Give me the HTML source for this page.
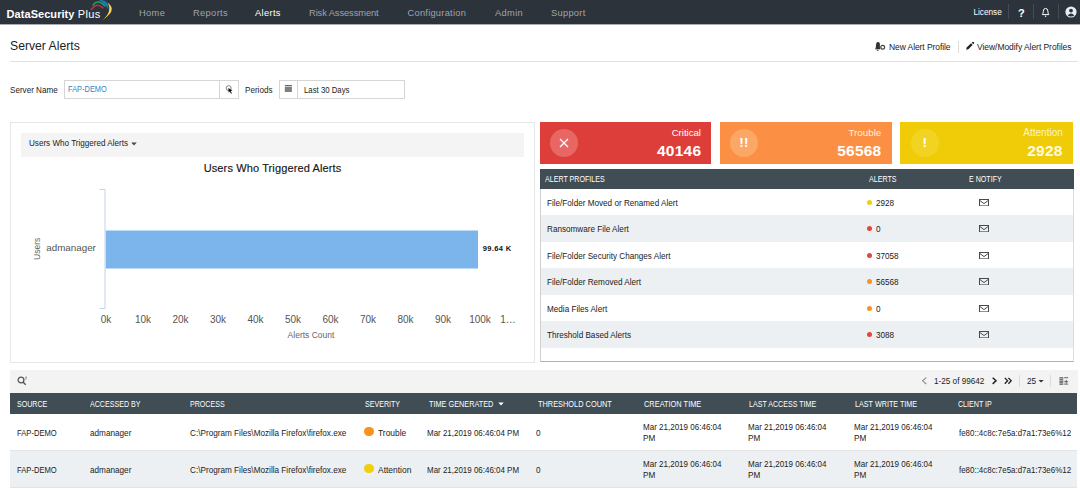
<!DOCTYPE html>
<html>
<head>
<meta charset="utf-8">
<title>Server Alerts</title>
<style>
*{box-sizing:border-box;margin:0;padding:0}
html,body{width:1080px;height:497px;overflow:hidden;background:#fff}
body{font-family:"Liberation Sans",sans-serif;color:#222;position:relative;font-size:9px}
.abs{position:absolute;white-space:nowrap}
/* header */
#hdr{position:absolute;left:0;top:0;width:1080px;height:25px;background:#2d333b;border-bottom:1px solid #abadb1}
#hdr .nav{position:absolute;top:7.400px;font-size:9.300px;letter-spacing:0.350px;color:#a0a4a9;line-height:12px;white-space:nowrap}
#hdr .nav.on{color:#fff}
#logo{position:absolute;left:6.600px;top:6.300px;font-size:11px;line-height:16px;color:#fff;white-space:nowrap;letter-spacing:0.050px}
#logo b{font-weight:bold}
.vsep{position:absolute;top:4px;width:1px;height:15px;background:#454b53}
/* title */
#title{left:10px;top:37.500px;font-size:12.200px;line-height:16px;color:#222}
#hr1{position:absolute;left:10px;top:61px;width:1068px;height:1px;background:#e2e2e2}
.tlink{top:42.100px;font-size:8.5px;line-height:11px;color:#222}
/* filter */
.lbl{font-size:9px;line-height:11px;color:#1c1c1c;transform:scaleX(0.900);transform-origin:0 0}
.box{position:absolute;border:1px solid #d6d6d6;background:#fff}
/* panels */
#chart{position:absolute;left:10px;top:122px;width:525px;height:241px;border:1px solid #e6e6e6;background:#fff}
#ddbar{position:absolute;left:20.500px;top:133px;width:503.500px;height:24px;background:#f4f4f4}
#right{position:absolute;left:540px;top:169px;width:534px;height:193px;border:1px solid #d0d0d0;border-bottom-color:#b0b0b0;border-right-color:#dcdcdc;border-top:none;background:#fff}
.card{position:absolute;top:122px;height:42px;color:#fff}
.card .ic{position:absolute;left:9.500px;top:7px;width:28px;height:28px;border-radius:50%}
.card .t{position:absolute;right:10px;top:5.300px;font-size:9.600px;line-height:12px}
.card .n{position:absolute;right:9.700px;top:17.600px;font-size:15.500px;letter-spacing:0.250px;line-height:22px;font-weight:bold}
.th{position:absolute;background:#414d55;color:#fff;font-size:8.300px}
.th span{position:absolute;white-space:nowrap;line-height:10px;transform:scaleX(0.855);transform-origin:0 0}
.row{position:absolute;left:541px;width:532px;height:26px;font-size:8.800px;color:#1a1a1a}
.row.g{background:#edf0f2}
.row span{position:absolute;top:9.100px;line-height:11px;white-space:nowrap;transform:scaleX(0.925);transform-origin:0 0}
.dot{position:absolute;width:5.400px;height:5.400px;border-radius:50%;top:10.600px;left:325.500px}
.env{position:absolute;left:438.200px;top:10px}
/* bottom table */
#tbar{position:absolute;left:10px;top:370px;width:1068px;height:23px;background:#f3f3f3}
.brow{position:absolute;left:10px;width:1067px;height:37px;font-size:8.800px;color:#222;border-bottom:1px solid #e4e4e4}
.brow.g{background:#edf0f2}
.brow span{position:absolute;line-height:11px;white-space:nowrap;transform:scaleX(0.930);transform-origin:0 0}
.sdot{position:absolute;left:354.400px;top:12.800px;width:9.400px;height:9.400px;border-radius:50%}
</style>
</head>
<body>
<!-- HEADER -->
<div id="hdr">
  <div id="logo"><b>DataSecurity</b> <span style="margin-left:0.300px;letter-spacing:0.350px">Plus</span></div>
  <svg class="abs" style="left:88px;top:0" width="26" height="24" viewBox="88 0 26 24">
    <path d="M91.300 9.500 Q96.700 2 102.900 7.800" fill="none" stroke="#b8324a" stroke-width="1.600" stroke-linecap="round"/>
    <path d="M93 5 Q97.800 -1.300 104.900 5.900" fill="none" stroke="#21a04f" stroke-width="1.500" stroke-linecap="round"/>
    <path d="M98.800 0 Q109.300 -0.700 108.400 9.700 Q105 3.800 98.800 0Z" fill="#1778b8"/>
    <path d="M107.500 2.400 Q118.300 10.500 101.900 20.400 Q113 11.500 107.500 2.400Z" fill="#f6d55c"/>
  </svg>
  <div class="nav" style="left:139px">Home</div>
  <div class="nav" style="left:193px">Reports</div>
  <div class="nav on" style="left:255px">Alerts</div>
  <div class="nav" style="left:309px;letter-spacing:-0.080px">Risk Assessment</div>
  <div class="nav" style="left:407.500px;letter-spacing:0.250px">Configuration</div>
  <div class="nav" style="left:495px">Admin</div>
  <div class="nav" style="left:551px;letter-spacing:0.280px">Support</div>
  <div class="nav on" style="left:973.500px;top:5.500px;font-size:8.300px;letter-spacing:-0.050px">License</div>
  <div class="vsep" style="left:1008px"></div>
  <div class="nav on" style="left:1018px;top:6.500px;font-size:11px;letter-spacing:0;font-weight:bold">?</div>
  <div class="vsep" style="left:1033px"></div>
  <svg class="abs" style="left:1040px;top:6px" width="12" height="12" viewBox="0 0 12 12">
    <path d="M2.3 8.6 Q3.300 7.600 3.300 5.400 Q3.300 2.400 5.600 2.400 Q7.900 2.400 7.900 5.400 Q7.900 7.600 8.900 8.600 Z" fill="none" stroke="#fff" stroke-width="1" stroke-linejoin="round"/>
    <circle cx="5.600" cy="10.300" r="0.700" fill="#fff"/>
  </svg>
  <div class="vsep" style="left:1058px"></div>
  <svg class="abs" style="left:1064.500px;top:5.700px" width="12" height="12" viewBox="0 0 12 12">
    <circle cx="6" cy="6" r="5.6" fill="#e9edf2"/>
    <circle cx="6" cy="4.6" r="1.9" fill="#2d333b"/>
    <path d="M2.6 9.6 Q6 5.6 9.4 9.6 Q6 11.6 2.6 9.6Z" fill="#2d333b"/>
  </svg>
</div>

<!-- TITLE -->
<div id="title" class="abs">Server Alerts</div>
<svg class="abs" style="left:873px;top:40px" width="14" height="12" viewBox="873 40 14 12">
  <path d="M875 49.200 Q876 48 876 45.500 Q876 42.100 878 42.100 Q880.200 42.100 879.900 45.500 Q879.700 48 880.400 49.200Z" fill="#333"/>
  <rect x="876.800" y="49.800" width="1.800" height="0.900" fill="#333"/>
  <circle cx="882.700" cy="47.200" r="1.900" fill="#fff" stroke="#444" stroke-width="1.200"/>
</svg>
<div class="abs tlink" style="left:889px;letter-spacing:-0.080px">New Alert Profile</div>
<div class="abs" style="left:958px;top:41px;width:1px;height:12px;background:#dcdcdc"></div>
<svg class="abs" style="left:964px;top:40px" width="12" height="12" viewBox="964 40 12 12">
  <path d="M966.100 49.800 L966.700 47.600 L971 43.300 L972.600 44.900 L968.300 49.200Z" fill="#222"/>
  <path d="M971.700 42.700 L972.500 41.900 Q973 41.500 973.500 42 L974.100 42.600 Q974.500 43.100 974 43.600 L973.300 44.300Z" fill="#222"/>
</svg>
<div class="abs tlink" style="left:977px;letter-spacing:-0.050px">View/Modify Alert Profiles</div>
<div id="hr1"></div>

<!-- FILTER -->
<div class="abs lbl" style="left:10px;top:84.800px">Server Name</div>
<div class="box" style="left:64px;top:80px;width:156px;height:19px"></div>
<div class="abs lbl" style="left:67.500px;top:84.300px;color:#3f7fbc;font-size:8.600px;transform:scaleX(0.865)">FAP-DEMO</div>
<div class="box" style="left:219px;top:80px;width:20px;height:19px"></div>
<svg class="abs" style="left:224px;top:84px" width="11" height="11" viewBox="224 84 11 11">
  <circle cx="228.700" cy="88.100" r="2.500" fill="none" stroke="#777" stroke-width="0.900"/>
  <path d="M228.300 88 L232.500 90.500 L230.700 91.100 L231.900 93.300 L231 93.800 L229.900 91.600 L228.700 92.800Z" fill="#111"/>
</svg>
<div class="abs lbl" style="left:245px;top:84.800px">Periods</div>
<div class="box" style="left:279px;top:80px;width:19px;height:19px"></div>
<svg class="abs" style="left:284px;top:84px" width="9" height="9" viewBox="284 84 9 9">
  <rect x="284.800" y="85" width="7.100" height="1.200" fill="#666"/>
  <rect x="284.800" y="86.800" width="7.100" height="5.200" fill="#808080"/>
</svg>
<div class="box" style="left:297px;top:80px;width:108px;height:19px"></div>
<div class="abs lbl" style="left:304px;top:84.500px;transform:scaleX(0.865)">Last 30 Days</div>

<!-- CHART PANEL -->
<div id="chart"></div>
<div id="ddbar"></div>
<div class="abs lbl" style="left:28.600px;top:138.300px">Users Who Triggered Alerts</div>
<svg class="abs" style="left:131px;top:142px" width="6" height="4" viewBox="0 0 6 4"><path d="M0.3 0.5 H5.7 L3 3.5Z" fill="#444"/></svg>
<svg class="abs" style="left:11px;top:158px" width="519" height="200" viewBox="11 158 519 200" font-family="'Liberation Sans',sans-serif">
  <text x="272.500" y="171.600" text-anchor="middle" font-size="11" fill="#161616" stroke="#161616" stroke-width="0.150" letter-spacing="0.120">Users Who Triggered Alerts</text>
  <path d="M99.5 189.5 H105 V308.500 H99.500" fill="none" stroke="#c6d2e6" stroke-width="1"/>
  <rect x="105.800" y="230.500" width="372.200" height="38" fill="#7cb5ec"/>
  <text x="46.300" y="251" font-size="9.800" fill="#555">admanager</text>
  <text x="482.800" y="251" font-size="7.500" font-weight="bold" fill="#111" letter-spacing="0.350">99.64 K</text>
  <text transform="translate(40.300,248.800) rotate(-90)" text-anchor="middle" font-size="8.500" fill="#666">Users</text>
  <g font-size="10" fill="#555" text-anchor="middle">
    <text x="106" y="323">0k</text>
    <text x="143" y="323">10k</text>
    <text x="180.500" y="323">20k</text>
    <text x="218" y="323">30k</text>
    <text x="255.500" y="323">40k</text>
    <text x="293" y="323">50k</text>
    <text x="330.500" y="323">60k</text>
    <text x="368" y="323">70k</text>
    <text x="405.500" y="323">80k</text>
    <text x="443" y="323">90k</text>
    <text x="480" y="323">100k</text>
    <text x="508" y="323">1…</text>
  </g>
  <text x="311" y="338" text-anchor="middle" font-size="8.500" fill="#666">Alerts Count</text>
</svg>

<!-- RIGHT PANEL -->
<div id="right"></div>
<div class="card" style="left:540px;width:171px;background:#de3e3a">
  <div class="ic" style="background:#e86764"></div>
  <svg class="abs" style="left:18.500px;top:16px" width="10" height="10" viewBox="0 0 10 10"><path d="M1 1 L9 9 M9 1 L1 9" stroke="#fff" stroke-width="1.300" fill="none"/></svg>
  <div class="t">Critical</div><div class="n">40146</div>
</div>
<div class="card" style="left:720px;width:171.500px;background:#fb8f43">
  <div class="ic" style="background:#fca766"></div>
  <div class="abs" style="left:10px;top:13.800px;width:28px;text-align:center;font-size:13.500px;line-height:14px;font-weight:bold;color:#fff;letter-spacing:0.300px">!!</div>
  <div class="t" style="color:#ffeedd;font-size:9.800px;right:10.200px">Trouble</div><div class="n" style="right:10px">56568</div>
</div>
<div class="card" style="left:900px;width:173px;background:#efcb08">
  <div class="ic" style="background:#f2d322;left:10.700px"></div>
  <div class="abs" style="left:10.700px;top:13.800px;width:28px;text-align:center;font-size:13.500px;line-height:14px;font-weight:bold;color:#fff">!</div>
  <div class="t" style="color:#fdf5c4;font-size:10px;right:10.200px">Attention</div><div class="n" style="color:#fffbe0;right:10.300px">2928</div>
</div>
<div class="th" style="left:540px;top:169px;width:534px;height:20px">
  <span style="left:5.400px;top:5px">ALERT PROFILES</span>
  <span style="left:329px;top:5px">ALERTS</span>
  <span style="left:428.800px;top:5px">E NOTIFY</span>
</div>
<div class="row" style="top:189px;height:26px"><span style="left:6.200px">File/Folder Moved or Renamed Alert</span><i class="dot" style="background:#f0cf10"></i><span style="left:335px">2928</span><svg class="env" width="10" height="7.400" viewBox="0 0 10 7.400"><rect x="0.500" y="0.500" width="9" height="6.400" fill="none" stroke="#4a4a4a" stroke-width="1"/><path d="M1 1.600 L5 4.600 L9 1.600" fill="none" stroke="#4a4a4a" stroke-width="1"/></svg></div>
<div class="row g" style="top:215px;height:27px"><span style="left:6.200px">Ransomware File Alert</span><i class="dot" style="background:#e2463f"></i><span style="left:335px">0</span><svg class="env" width="10" height="7.400" viewBox="0 0 10 7.400"><rect x="0.500" y="0.500" width="9" height="6.400" fill="none" stroke="#4a4a4a" stroke-width="1"/><path d="M1 1.600 L5 4.600 L9 1.600" fill="none" stroke="#4a4a4a" stroke-width="1"/></svg></div>
<div class="row" style="top:242px;height:26px"><span style="left:6.200px">File/Folder Security Changes Alert</span><i class="dot" style="background:#e2463f"></i><span style="left:335px">37058</span><svg class="env" width="10" height="7.400" viewBox="0 0 10 7.400"><rect x="0.500" y="0.500" width="9" height="6.400" fill="none" stroke="#4a4a4a" stroke-width="1"/><path d="M1 1.600 L5 4.600 L9 1.600" fill="none" stroke="#4a4a4a" stroke-width="1"/></svg></div>
<div class="row g" style="top:268px;height:27px"><span style="left:6.200px">File/Folder Removed Alert</span><i class="dot" style="background:#f7941d"></i><span style="left:335px">56568</span><svg class="env" width="10" height="7.400" viewBox="0 0 10 7.400"><rect x="0.500" y="0.500" width="9" height="6.400" fill="none" stroke="#4a4a4a" stroke-width="1"/><path d="M1 1.600 L5 4.600 L9 1.600" fill="none" stroke="#4a4a4a" stroke-width="1"/></svg></div>
<div class="row" style="top:295px;height:26px"><span style="left:6.200px">Media Files Alert</span><i class="dot" style="background:#f7941d"></i><span style="left:335px">0</span><svg class="env" width="10" height="7.400" viewBox="0 0 10 7.400"><rect x="0.500" y="0.500" width="9" height="6.400" fill="none" stroke="#4a4a4a" stroke-width="1"/><path d="M1 1.600 L5 4.600 L9 1.600" fill="none" stroke="#4a4a4a" stroke-width="1"/></svg></div>
<div class="row g" style="top:321px;height:27px"><span style="left:6.200px">Threshold Based Alerts</span><i class="dot" style="background:#e2463f"></i><span style="left:335px">3088</span><svg class="env" width="10" height="7.400" viewBox="0 0 10 7.400"><rect x="0.500" y="0.500" width="9" height="6.400" fill="none" stroke="#4a4a4a" stroke-width="1"/><path d="M1 1.600 L5 4.600 L9 1.600" fill="none" stroke="#4a4a4a" stroke-width="1"/></svg></div>

<!-- BOTTOM TABLE -->
<div id="tbar"></div>
<svg class="abs" style="left:17px;top:376px" width="11" height="10" viewBox="0 0 11 10"><circle cx="4" cy="4" r="2.9" fill="none" stroke="#555" stroke-width="1.3"/><path d="M6.200 6.200 L8.700 8.800" stroke="#555" stroke-width="1.4"/><path d="M8.300 1.300 H10 M8.300 3 H9.500" stroke="#555" stroke-width="0.8"/></svg>
<svg class="abs" style="left:920px;top:376px" width="8" height="10" viewBox="920 376 8 10"><path d="M926.300 377.600 L922.600 380.800 L926.300 384" fill="none" stroke="#8a8a8a" stroke-width="1.100"/></svg>
<div class="abs lbl" style="left:933.500px;top:375.800px;font-size:8.700px;transform:scaleX(0.940);transform-origin:0 0">1-25 of 99642</div>
<svg class="abs" style="left:990px;top:376px" width="24" height="10" viewBox="990 376 24 10"><path d="M992.700 377.700 L996 380.800 L992.700 383.900" fill="none" stroke="#222" stroke-width="1.500"/><path d="M1004.800 377.900 L1007.600 380.800 L1004.800 383.700 M1008.400 377.900 L1011.200 380.800 L1008.400 383.700" fill="none" stroke="#222" stroke-width="1.300"/></svg>
<div class="abs" style="left:1019px;top:375px;width:1px;height:12px;background:#dcdcdc"></div>
<div class="abs lbl" style="left:1027px;top:375.800px;font-size:8.700px;transform:scaleX(0.940);transform-origin:0 0">25</div>
<svg class="abs" style="left:1038px;top:379px" width="7" height="5" viewBox="0 0 7 5"><path d="M0.500 1 H5.700 L3.100 3.600Z" fill="#333"/></svg>
<div class="abs" style="left:1050px;top:375px;width:1px;height:12px;background:#dcdcdc"></div>
<svg class="abs" style="left:1059px;top:377px" width="10" height="8" viewBox="0 0 10 8"><path d="M0.400 0.800 H4.300 M0.400 2.900 H4.300 M0.400 5 H4.300 M0.400 7.100 H4.300" stroke="#555" stroke-width="1.300"/><path d="M5.200 0.700 H9.200 M5.200 4.700 H9.200 M5.200 7.100 H9.200 M7.200 2.800 V6.400" stroke="#555" stroke-width="0.900"/></svg>
<div class="th" style="left:10px;top:393px;width:1067px;height:21px">
  <span style="left:7px;top:6px">SOURCE</span>
  <span style="left:80px;top:6px">ACCESSED BY</span>
  <span style="left:180px;top:6px">PROCESS</span>
  <span style="left:355px;top:6px">SEVERITY</span>
  <span style="left:418.500px;top:6px;transform:scaleX(0.880)">TIME GENERATED</span>
  <span style="left:527.500px;top:6px;transform:scaleX(0.890)">THRESHOLD COUNT</span>
  <span style="left:634px;top:6px;transform:scaleX(0.892)">CREATION TIME</span>
  <span style="left:739px;top:6px">LAST ACCESS TIME</span>
  <span style="left:844.500px;top:6px;transform:scaleX(0.868)">LAST WRITE TIME</span>
  <span style="left:948px;top:6px">CLIENT IP</span>
</div>
<svg class="abs" style="left:498px;top:402px" width="6" height="4" viewBox="0 0 6 4"><path d="M0.300 0.500 H5.700 L3 3.500Z" fill="#fff"/></svg>
<div class="brow" style="top:414px">
  <span style="left:7.200px;top:13.800px;transform:scaleX(0.865)">FAP-DEMO</span><span style="left:80px;top:13.800px">admanager</span>
  <span style="left:180px;top:13.800px">C:\Program Files\Mozilla Firefox\firefox.exe</span>
  <i class="sdot" style="background:#f7941d"></i><span style="left:367.500px;top:13.800px;transform:scaleX(0.960)">Trouble</span>
  <span style="left:417.200px;top:13.800px;transform:scaleX(0.905)">Mar 21,2019 06:46:04 PM</span><span style="left:526px;top:13.800px">0</span>
  <span style="left:632.600px;top:7.700px;transform:scaleX(0.912)">Mar 21,2019 06:46:04</span><span style="left:632.600px;top:18.800px">PM</span>
  <span style="left:738.300px;top:7.700px;transform:scaleX(0.912)">Mar 21,2019 06:46:04</span><span style="left:738.300px;top:18.800px">PM</span>
  <span style="left:843.800px;top:7.700px;transform:scaleX(0.912)">Mar 21,2019 06:46:04</span><span style="left:843.800px;top:18.800px">PM</span>
  <span style="left:948.500px;top:13.800px;transform:scaleX(0.902)">fe80::4c8c:7e5a:d7a1:73e6%12</span>
</div>
<div class="brow g" style="top:451px">
  <span style="left:7.200px;top:13.800px;transform:scaleX(0.865)">FAP-DEMO</span><span style="left:80px;top:13.800px">admanager</span>
  <span style="left:180px;top:13.800px">C:\Program Files\Mozilla Firefox\firefox.exe</span>
  <i class="sdot" style="background:#f0cf10"></i><span style="left:367.500px;top:13.800px;transform:scaleX(0.960)">Attention</span>
  <span style="left:417.200px;top:13.800px;transform:scaleX(0.905)">Mar 21,2019 06:46:04 PM</span><span style="left:526px;top:13.800px">0</span>
  <span style="left:632.600px;top:7.700px;transform:scaleX(0.912)">Mar 21,2019 06:46:04</span><span style="left:632.600px;top:18.800px">PM</span>
  <span style="left:738.300px;top:7.700px;transform:scaleX(0.912)">Mar 21,2019 06:46:04</span><span style="left:738.300px;top:18.800px">PM</span>
  <span style="left:843.800px;top:7.700px;transform:scaleX(0.912)">Mar 21,2019 06:46:04</span><span style="left:843.800px;top:18.800px">PM</span>
  <span style="left:948.500px;top:13.800px;transform:scaleX(0.902)">fe80::4c8c:7e5a:d7a1:73e6%12</span>
</div>
</body>
</html>
